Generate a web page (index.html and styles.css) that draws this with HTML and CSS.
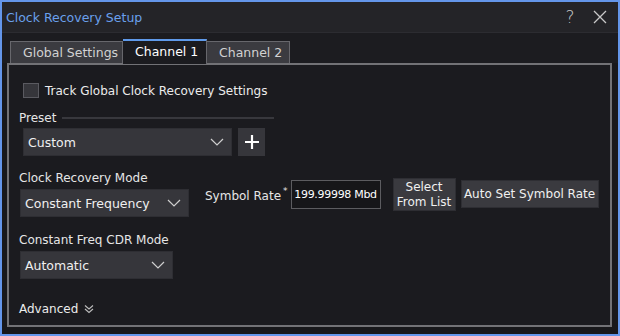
FILE: index.html
```html
<!DOCTYPE html>
<html lang="en">
<head>
    <meta charset="UTF-8">
    <title>Clock Recovery Setup</title>
    <link rel="stylesheet" href="styles.css">
</head>
<body>
    <div class="window">
        <!-- 标题栏 -->
        <div class="titlebar">
            <span class="title">Clock Recovery Setup</span>
            <span class="title-btn help">?</span>
            <span class="title-btn close">
                <svg width="14" height="14" viewBox="0 0 14 14"><path d="M1 1L13 13M13 1L1 13" stroke="#c8c8c8" stroke-width="1.3" fill="none"/></svg>
            </span>
        </div>

        <div class="tabs">
            <div class="tab tab-global">Global Settings</div>
            <div class="tab active">Channel 1</div>
            <div class="tab tab-ch2">Channel 2</div>
        </div>

        <div class="panel">
            <label class="check-row">
                <span class="checkbox"></span>
                Track Global Clock Recovery Settings
            </label>

            <div class="section-title">
                <span>Preset</span>
                <span class="rule"></span>
            </div>
            <div class="preset-row">
                <div class="select preset-select">
                    <span>Custom</span>
                    <svg class="chev" width="14" height="8" viewBox="0 0 14 8"><path d="M1 1L7 7L13 1" stroke="#cfcfcf" stroke-width="1.2" fill="none"/></svg>
                </div>
                <div class="plus-btn">
                    <svg width="16" height="16" viewBox="0 0 16 16"><path d="M8 1V15M1 8H15" stroke="#ffffff" stroke-width="2.2" fill="none"/></svg>
                </div>
            </div>

            <div class="mode-row">
                <div class="field">
                    <div class="label">Clock Recovery Mode</div>
                    <div class="select mode-select">
                        <span>Constant Frequency</span>
                        <svg class="chev" width="14" height="8" viewBox="0 0 14 8"><path d="M1 1L7 7L13 1" stroke="#cfcfcf" stroke-width="1.2" fill="none"/></svg>
                    </div>
                </div>
                <div class="rate-group">
                    <span class="rate-label">Symbol Rate<sup>*</sup></span>
                    <div class="rate-input">199.99998 Mbd</div>
                    <div class="btn list-btn">Select<br>From List</div>
                    <div class="btn auto-btn">Auto Set Symbol Rate</div>
                </div>
            </div>

            <div class="field cdr-field">
                <div class="label">Constant Freq CDR Mode</div>
                <div class="select cdr-select">
                    <span>Automatic</span>
                    <svg class="chev" width="14" height="8" viewBox="0 0 14 8"><path d="M1 1L7 7L13 1" stroke="#cfcfcf" stroke-width="1.2" fill="none"/></svg>
                </div>
            </div>

            <div class="advanced">
                Advanced
                <svg width="10" height="10" viewBox="0 0 10 10"><path d="M1 1.5L5 5L9 1.5M1 5L5 8.5L9 5" stroke="#bdbdbd" stroke-width="1.1" fill="none"/></svg>
            </div>
        </div>
    </div>
</body>
</html>
```

FILE: styles.css
```css
body {
    margin: 0;
    font-family: "DejaVu Sans", sans-serif;
    font-size: 12px;
    color: #e6e6e6;
    background: #18181b;
}
.window {
    width: 620px;
    height: 336px;
    box-sizing: border-box;
    border: 2px solid #6496ea;
    background: #18181b;
    display: flex;
    flex-direction: column;
}
.titlebar {
    height: 30px;
    background: #242428;
    display: flex;
    align-items: center;
    padding-left: 4px;
    border-bottom: 1px solid #2c2c31;
}
.title {
    color: #6aa0ec;
    font-size: 12.5px;
    flex: 1;
}
.title-btn {
    color: #c8c8c8;
    width: 32px;
    text-align: center;
}
.help {
    font-size: 17px;
    font-weight: 300;
    width: 28px;
}
.close {
    display: flex;
    justify-content: center;
    padding-right: 2px;
}
/* 标签页 */
.tabs {
    display: flex;
    align-items: flex-end;
    padding: 5px 0 0 8px;
    background: #1c1c20;
    height: 25px;
}
.tab {
    height: 22px;
    box-sizing: border-box;
    line-height: 21px;
    padding: 0 0 0 12px;
    background: #3b3b40;
    border: 1px solid #67676c;
    border-bottom: none;
    color: #d2d2d2;
    font-size: 12.5px;
    white-space: nowrap;
}
.tab-global {
    width: 113px;
}
.tab-ch2 {
    width: 83px;
    border-left: none;
}
.tab.active {
    width: 84px;
    height: 25px;
    background: #1b1b1f;
    color: #ffffff;
    border-top: 2px solid #5f9aea;
    border-left: none;
    position: relative;
    top: 1px;
    z-index: 1;
    line-height: 22px;
}
.panel {
    margin: 0 6px 7px 5px;
    flex: 1;
    background: #1b1b1f;
    border: 2px solid #727276;
    padding: 0 10px;
    display: flex;
    flex-direction: column;
}
.check-row {
    display: flex;
    align-items: center;
    margin: 18px 0 0 4px;
    font-size: 12px;
    color: #ececec;
}
.checkbox {
    width: 14px;
    height: 13px;
    border: 1px solid #5a5a60;
    background: #36363b;
    margin-right: 6px;
}
.section-title {
    display: flex;
    align-items: center;
    margin-top: 12px;
    height: 16px;
}
.rule {
    width: 212px;
    height: 2px;
    background: #38383d;
    margin-left: 6px;
}
.preset-row {
    display: flex;
    margin: 2px 0 0 4px;
    gap: 6px;
}
.select {
    height: 28px;
    background: #36363b;
    border: 1px solid #2e2e33;
    box-sizing: border-box;
    display: flex;
    align-items: center;
    justify-content: space-between;
    padding: 0 7px 0 4px;
    font-size: 12.5px;
    color: #f0f0f0;
}
.preset-select {
    width: 209px;
}
.plus-btn {
    width: 27px;
    height: 28px;
    background: #36363b;
    display: flex;
    align-items: center;
    justify-content: center;
}
.mode-row {
    display: flex;
    align-items: center;
    margin-top: 14px;
}
.field {
    display: flex;
    flex-direction: column;
    margin-left: 1px;
}
.label {
    height: 16px;
    line-height: 16px;
    margin-bottom: 3px;
    margin-left: -1px;
}
.mode-select {
    width: 169px;
}
.rate-group {
    display: flex;
    align-items: center;
    margin-left: 16px;
    margin-top: 1px;
}
.rate-label sup {
    font-size: 9px;
    vertical-align: 6px;
    margin-left: 2px;
}
.rate-input {
    width: 90px;
    height: 29px;
    box-sizing: border-box;
    margin-left: 3px;
    border: 1px solid #5c5c60;
    background: #161619;
    line-height: 27px;
    text-align: center;
    color: #ffffff;
    font-size: 11px;
    letter-spacing: -0.3px;
    white-space: nowrap;
}
.btn {
    background: #3a3a3f;
    border: 1px solid #2e2e33;
    box-sizing: border-box;
    text-align: center;
    color: #f0f0f0;
}
.list-btn {
    width: 63px;
    height: 33px;
    margin-left: 12px;
    line-height: 15px;
    padding-top: 1px;
}
.auto-btn {
    width: 138px;
    height: 28px;
    line-height: 26px;
    margin-left: 5px;
    white-space: nowrap;
}
.cdr-field {
    margin-top: 15px;
}
.cdr-select {
    width: 153px;
}
.advanced {
    margin-top: 23px;
    display: flex;
    align-items: center;
    gap: 6px;
    color: #ececec;
}
```
